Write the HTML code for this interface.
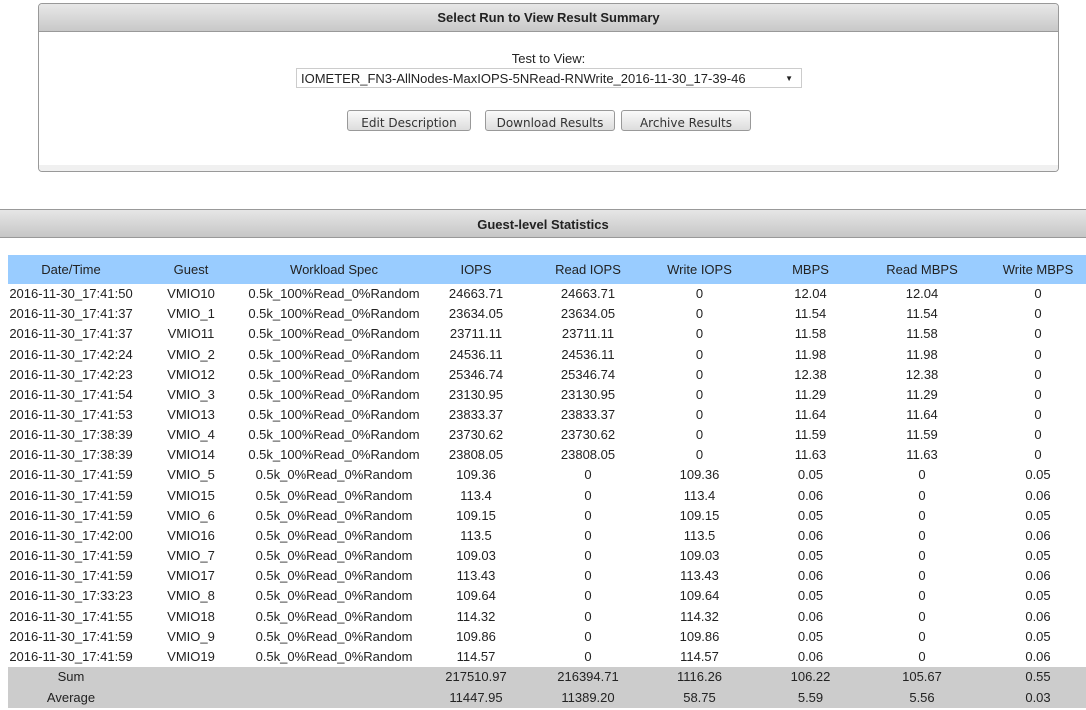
<!DOCTYPE html>
<html><head><meta charset="utf-8"><style>
body{margin:0;width:1086px;height:710px;overflow:hidden;background:#fff;font-family:"Liberation Sans",Arial,sans-serif;font-size:13px;color:#222;position:relative}
.panel{position:absolute;left:38px;top:3px;width:1019px;height:167px;border:1px solid #999;border-radius:4px;background:#fff;overflow:hidden}
.ph{height:27px;border-bottom:1px solid #999;background:linear-gradient(#e8e8e8,#c8c8c8);text-align:center;font-weight:bold;line-height:28px;font-size:13px;color:#222}
.strip{position:absolute;left:0;right:0;bottom:0;height:6px;background:#f0f0f0}
.lbl{position:absolute;left:0;width:1019px;top:47px;text-align:center}
.sel{position:absolute;left:257px;top:64px;width:504px;height:20px;border:1px solid #ccc;line-height:20px;padding-left:4px;box-sizing:border-box;width:506px;font-size:13px}
.sel span{position:absolute;right:8px;top:0;font-size:8px}
.btn{position:absolute;top:106px;height:21px;border:1px solid #999;border-radius:3px;background:linear-gradient(#fafafa,#ddd);text-align:center;line-height:24px;font-family:"DejaVu Sans",sans-serif;font-size:12px;color:#333;box-sizing:border-box}
.h2{position:absolute;left:0;top:209px;width:1086px;height:27px;border-top:1px solid #999;border-bottom:1px solid #999;background:linear-gradient(#e6e6e6,#c6c6c6);text-align:center;font-weight:bold;line-height:29px}
table{position:absolute;left:8px;top:255px;border-collapse:collapse;table-layout:fixed;width:1090px}
td,th{padding:0;text-align:center;white-space:nowrap;font-weight:normal;height:20.17px;line-height:20px;font-size:13px}
th{background:#99ccff;height:28px;line-height:29px}
tr.s td{background:#ccc;height:20.5px}
</style></head><body>
<div class="panel"><div class="ph">Select Run to View Result Summary</div>
<div class="lbl">Test to View:</div>
<div class="sel">IOMETER_FN3-AllNodes-MaxIOPS-5NRead-RNWrite_2016-11-30_17-39-46<span>▼</span></div>
<div class="btn" style="left:308px;width:124px">Edit Description</div>
<div class="btn" style="left:446px;width:130px">Download Results</div>
<div class="btn" style="left:582px;width:130px">Archive Results</div>
<div class="strip"></div></div>
<div class="h2">Guest-level Statistics</div>
<table>
<colgroup><col style="width:126px"><col style="width:114px"><col style="width:172px"><col style="width:112px"><col style="width:112px"><col style="width:111px"><col style="width:111px"><col style="width:112px"><col style="width:120px"></colgroup>
<tr><th>Date/Time</th><th>Guest</th><th>Workload Spec</th><th>IOPS</th><th>Read IOPS</th><th>Write IOPS</th><th>MBPS</th><th>Read MBPS</th><th>Write MBPS</th></tr>
<tr><td>2016-11-30_17:41:50</td><td>VMIO10</td><td>0.5k_100%Read_0%Random</td><td>24663.71</td><td>24663.71</td><td>0</td><td>12.04</td><td>12.04</td><td>0</td></tr>
<tr><td>2016-11-30_17:41:37</td><td>VMIO_1</td><td>0.5k_100%Read_0%Random</td><td>23634.05</td><td>23634.05</td><td>0</td><td>11.54</td><td>11.54</td><td>0</td></tr>
<tr><td>2016-11-30_17:41:37</td><td>VMIO11</td><td>0.5k_100%Read_0%Random</td><td>23711.11</td><td>23711.11</td><td>0</td><td>11.58</td><td>11.58</td><td>0</td></tr>
<tr><td>2016-11-30_17:42:24</td><td>VMIO_2</td><td>0.5k_100%Read_0%Random</td><td>24536.11</td><td>24536.11</td><td>0</td><td>11.98</td><td>11.98</td><td>0</td></tr>
<tr><td>2016-11-30_17:42:23</td><td>VMIO12</td><td>0.5k_100%Read_0%Random</td><td>25346.74</td><td>25346.74</td><td>0</td><td>12.38</td><td>12.38</td><td>0</td></tr>
<tr><td>2016-11-30_17:41:54</td><td>VMIO_3</td><td>0.5k_100%Read_0%Random</td><td>23130.95</td><td>23130.95</td><td>0</td><td>11.29</td><td>11.29</td><td>0</td></tr>
<tr><td>2016-11-30_17:41:53</td><td>VMIO13</td><td>0.5k_100%Read_0%Random</td><td>23833.37</td><td>23833.37</td><td>0</td><td>11.64</td><td>11.64</td><td>0</td></tr>
<tr><td>2016-11-30_17:38:39</td><td>VMIO_4</td><td>0.5k_100%Read_0%Random</td><td>23730.62</td><td>23730.62</td><td>0</td><td>11.59</td><td>11.59</td><td>0</td></tr>
<tr><td>2016-11-30_17:38:39</td><td>VMIO14</td><td>0.5k_100%Read_0%Random</td><td>23808.05</td><td>23808.05</td><td>0</td><td>11.63</td><td>11.63</td><td>0</td></tr>
<tr><td>2016-11-30_17:41:59</td><td>VMIO_5</td><td>0.5k_0%Read_0%Random</td><td>109.36</td><td>0</td><td>109.36</td><td>0.05</td><td>0</td><td>0.05</td></tr>
<tr><td>2016-11-30_17:41:59</td><td>VMIO15</td><td>0.5k_0%Read_0%Random</td><td>113.4</td><td>0</td><td>113.4</td><td>0.06</td><td>0</td><td>0.06</td></tr>
<tr><td>2016-11-30_17:41:59</td><td>VMIO_6</td><td>0.5k_0%Read_0%Random</td><td>109.15</td><td>0</td><td>109.15</td><td>0.05</td><td>0</td><td>0.05</td></tr>
<tr><td>2016-11-30_17:42:00</td><td>VMIO16</td><td>0.5k_0%Read_0%Random</td><td>113.5</td><td>0</td><td>113.5</td><td>0.06</td><td>0</td><td>0.06</td></tr>
<tr><td>2016-11-30_17:41:59</td><td>VMIO_7</td><td>0.5k_0%Read_0%Random</td><td>109.03</td><td>0</td><td>109.03</td><td>0.05</td><td>0</td><td>0.05</td></tr>
<tr><td>2016-11-30_17:41:59</td><td>VMIO17</td><td>0.5k_0%Read_0%Random</td><td>113.43</td><td>0</td><td>113.43</td><td>0.06</td><td>0</td><td>0.06</td></tr>
<tr><td>2016-11-30_17:33:23</td><td>VMIO_8</td><td>0.5k_0%Read_0%Random</td><td>109.64</td><td>0</td><td>109.64</td><td>0.05</td><td>0</td><td>0.05</td></tr>
<tr><td>2016-11-30_17:41:55</td><td>VMIO18</td><td>0.5k_0%Read_0%Random</td><td>114.32</td><td>0</td><td>114.32</td><td>0.06</td><td>0</td><td>0.06</td></tr>
<tr><td>2016-11-30_17:41:59</td><td>VMIO_9</td><td>0.5k_0%Read_0%Random</td><td>109.86</td><td>0</td><td>109.86</td><td>0.05</td><td>0</td><td>0.05</td></tr>
<tr><td>2016-11-30_17:41:59</td><td>VMIO19</td><td>0.5k_0%Read_0%Random</td><td>114.57</td><td>0</td><td>114.57</td><td>0.06</td><td>0</td><td>0.06</td></tr>
<tr class="s"><td>Sum</td><td></td><td></td><td>217510.97</td><td>216394.71</td><td>1116.26</td><td>106.22</td><td>105.67</td><td>0.55</td></tr>
<tr class="s"><td>Average</td><td></td><td></td><td>11447.95</td><td>11389.20</td><td>58.75</td><td>5.59</td><td>5.56</td><td>0.03</td></tr>
</table>
</body></html>
